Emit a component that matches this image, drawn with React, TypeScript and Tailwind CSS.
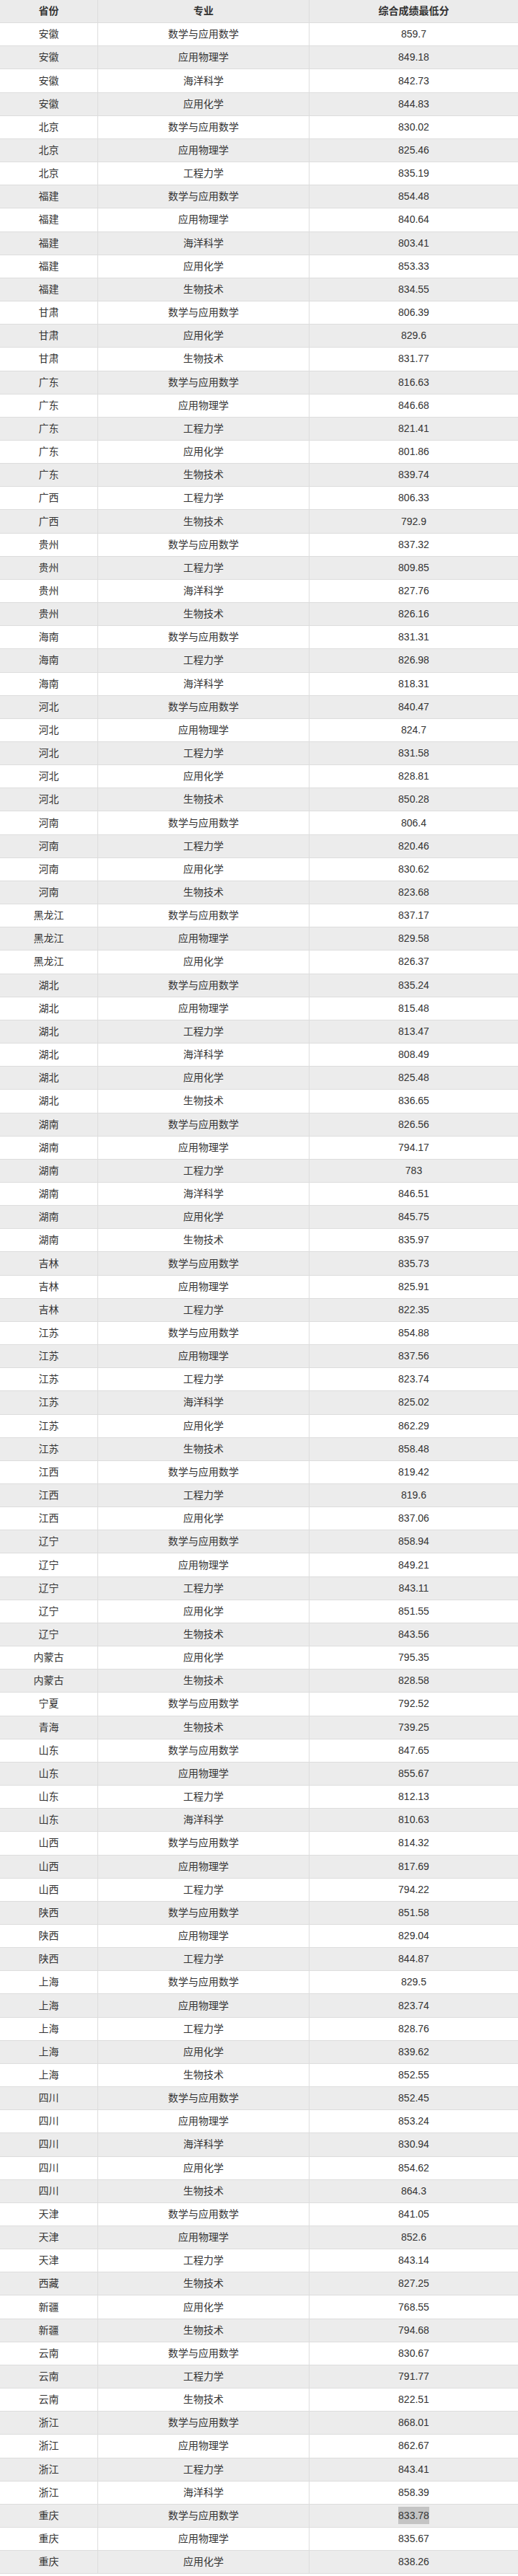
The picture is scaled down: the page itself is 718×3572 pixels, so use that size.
const rows: [string, string, string][] = [
  ['安徽', '数学与应用数学', '859.7'],
  ['安徽', '应用物理学', '849.18'],
  ['安徽', '海洋科学', '842.73'],
  ['安徽', '应用化学', '844.83'],
  ['北京', '数学与应用数学', '830.02'],
  ['北京', '应用物理学', '825.46'],
  ['北京', '工程力学', '835.19'],
  ['福建', '数学与应用数学', '854.48'],
  ['福建', '应用物理学', '840.64'],
  ['福建', '海洋科学', '803.41'],
  ['福建', '应用化学', '853.33'],
  ['福建', '生物技术', '834.55'],
  ['甘肃', '数学与应用数学', '806.39'],
  ['甘肃', '应用化学', '829.6'],
  ['甘肃', '生物技术', '831.77'],
  ['广东', '数学与应用数学', '816.63'],
  ['广东', '应用物理学', '846.68'],
  ['广东', '工程力学', '821.41'],
  ['广东', '应用化学', '801.86'],
  ['广东', '生物技术', '839.74'],
  ['广西', '工程力学', '806.33'],
  ['广西', '生物技术', '792.9'],
  ['贵州', '数学与应用数学', '837.32'],
  ['贵州', '工程力学', '809.85'],
  ['贵州', '海洋科学', '827.76'],
  ['贵州', '生物技术', '826.16'],
  ['海南', '数学与应用数学', '831.31'],
  ['海南', '工程力学', '826.98'],
  ['海南', '海洋科学', '818.31'],
  ['河北', '数学与应用数学', '840.47'],
  ['河北', '应用物理学', '824.7'],
  ['河北', '工程力学', '831.58'],
  ['河北', '应用化学', '828.81'],
  ['河北', '生物技术', '850.28'],
  ['河南', '数学与应用数学', '806.4'],
  ['河南', '工程力学', '820.46'],
  ['河南', '应用化学', '830.62'],
  ['河南', '生物技术', '823.68'],
  ['黑龙江', '数学与应用数学', '837.17'],
  ['黑龙江', '应用物理学', '829.58'],
  ['黑龙江', '应用化学', '826.37'],
  ['湖北', '数学与应用数学', '835.24'],
  ['湖北', '应用物理学', '815.48'],
  ['湖北', '工程力学', '813.47'],
  ['湖北', '海洋科学', '808.49'],
  ['湖北', '应用化学', '825.48'],
  ['湖北', '生物技术', '836.65'],
  ['湖南', '数学与应用数学', '826.56'],
  ['湖南', '应用物理学', '794.17'],
  ['湖南', '工程力学', '783'],
  ['湖南', '海洋科学', '846.51'],
  ['湖南', '应用化学', '845.75'],
  ['湖南', '生物技术', '835.97'],
  ['吉林', '数学与应用数学', '835.73'],
  ['吉林', '应用物理学', '825.91'],
  ['吉林', '工程力学', '822.35'],
  ['江苏', '数学与应用数学', '854.88'],
  ['江苏', '应用物理学', '837.56'],
  ['江苏', '工程力学', '823.74'],
  ['江苏', '海洋科学', '825.02'],
  ['江苏', '应用化学', '862.29'],
  ['江苏', '生物技术', '858.48'],
  ['江西', '数学与应用数学', '819.42'],
  ['江西', '工程力学', '819.6'],
  ['江西', '应用化学', '837.06'],
  ['辽宁', '数学与应用数学', '858.94'],
  ['辽宁', '应用物理学', '849.21'],
  ['辽宁', '工程力学', '843.11'],
  ['辽宁', '应用化学', '851.55'],
  ['辽宁', '生物技术', '843.56'],
  ['内蒙古', '应用化学', '795.35'],
  ['内蒙古', '生物技术', '828.58'],
  ['宁夏', '数学与应用数学', '792.52'],
  ['青海', '生物技术', '739.25'],
  ['山东', '数学与应用数学', '847.65'],
  ['山东', '应用物理学', '855.67'],
  ['山东', '工程力学', '812.13'],
  ['山东', '海洋科学', '810.63'],
  ['山西', '数学与应用数学', '814.32'],
  ['山西', '应用物理学', '817.69'],
  ['山西', '工程力学', '794.22'],
  ['陕西', '数学与应用数学', '851.58'],
  ['陕西', '应用物理学', '829.04'],
  ['陕西', '工程力学', '844.87'],
  ['上海', '数学与应用数学', '829.5'],
  ['上海', '应用物理学', '823.74'],
  ['上海', '工程力学', '828.76'],
  ['上海', '应用化学', '839.62'],
  ['上海', '生物技术', '852.55'],
  ['四川', '数学与应用数学', '852.45'],
  ['四川', '应用物理学', '853.24'],
  ['四川', '海洋科学', '830.94'],
  ['四川', '应用化学', '854.62'],
  ['四川', '生物技术', '864.3'],
  ['天津', '数学与应用数学', '841.05'],
  ['天津', '应用物理学', '852.6'],
  ['天津', '工程力学', '843.14'],
  ['西藏', '生物技术', '827.25'],
  ['新疆', '应用化学', '768.55'],
  ['新疆', '生物技术', '794.68'],
  ['云南', '数学与应用数学', '830.67'],
  ['云南', '工程力学', '791.77'],
  ['云南', '生物技术', '822.51'],
  ['浙江', '数学与应用数学', '868.01'],
  ['浙江', '应用物理学', '862.67'],
  ['浙江', '工程力学', '843.41'],
  ['浙江', '海洋科学', '858.39'],
  ['重庆', '数学与应用数学', '833.78'],
  ['重庆', '应用物理学', '835.67'],
  ['重庆', '应用化学', '838.26'],
];

const cell = 'flex items-center justify-center';

export default function App() {
  return (
    <div
      className="w-[718px] bg-white text-[14px] text-[#333333]"
      style={{ fontFamily: '"Liberation Sans", "Noto Sans CJK SC", sans-serif' }}
    >
      {/* header */}
      <div className="grid h-[32.17px] grid-cols-[136px_293px_1fr] border-b border-[#dddddd] bg-[#ebebeb] font-bold">
        <div className={`${cell} border-r border-[#dddddd]`}>省份</div>
        <div className={`${cell} border-r border-[#dddddd]`}>专业</div>
        <div className={cell}>综合成绩最低分</div>
      </div>

      {rows.map(([province, major, score], i) => (
        <div
          key={i}
          className={`grid h-[32.17px] grid-cols-[136px_293px_1fr] border-b border-[#dddddd] ${
            i % 2 === 0 ? 'bg-white' : 'bg-[#ececec]'
          }`}
        >
          <div className={`${cell} border-r border-[#dddddd]`}>{province}</div>
          <div className={`${cell} border-r border-[#dddddd]`}>{major}</div>
          <div className={cell}>
            {i === 107 ? (
              <span className="bg-[#c4c4c4] leading-[24px]">{score}</span>
            ) : (
              score
            )}
          </div>
        </div>
      ))}
    </div>
  );
}
